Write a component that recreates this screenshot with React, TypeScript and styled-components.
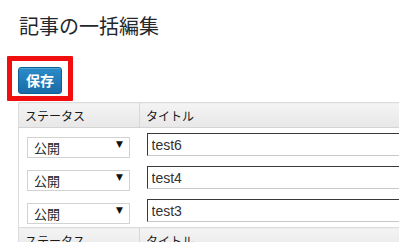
import React from "react";
import styled, { createGlobalStyle } from "styled-components";

const Global = createGlobalStyle`
  html, body { margin: 0; padding: 0; background: #fff; overflow: hidden; }
  body { font-family: "Noto Sans CJK JP", "Liberation Sans", sans-serif; color: #333; }
`;

const Page = styled.div`
  padding: 12px 0 0 18px;
  width: 520px;
`;

const Title = styled.h1`
  margin: 0 0 16px 1px;
  font-size: 20px;
  line-height: 28px;
  font-weight: 400;
  color: #23282d;
  font-family: "Noto Sans CJK JP", sans-serif;
`;

const Highlight = styled.div`
  display: inline-flex;
  margin-left: -11px;
  border: 5px solid #f00e0e;
  border-radius: 1px;
  padding: 6px 6px 2px 6px;
`;

const PrimaryButton = styled.button`
  height: 27px;
  width: 44px;
  padding: 0;
  border: 1px solid #0b5f94;
  border-radius: 3px;
  background: linear-gradient(to bottom, #2a8bc9, #1a6ca6);
  box-shadow: inset 0 1px 0 rgba(120, 200, 230, 0.5);
  color: #fff;
  font-family: "Noto Sans CJK JP", sans-serif;
  font-weight: 700;
  font-size: 14px;
  line-height: 25px;
  cursor: pointer;
`;

const Table = styled.table`
  margin-top: 1px;
  border-collapse: collapse;
  width: 500px;
  border-left: 1px solid #dcdcdc;
`;

const HeadCell = styled.th<{ $w?: number }>`
  width: ${(p) => (p.$w ? `${p.$w}px` : "auto")};
  height: 24px;
  padding: 0 6px;
  text-align: left;
  font-size: 12px;
  font-weight: 400;
  color: #1a1a1a;
  background: linear-gradient(to bottom, #f4f4f4, #e8e8e8);
  border-top: 1px solid #dcdcdc;
  border-bottom: 1px solid #d4d4d4;
  border-right: 1px solid #d8d8d8;
  font-family: "Noto Sans CJK JP", sans-serif;
`;

const Cell = styled.td<{ $pl: number }>`
  height: 33px;
  padding: 0 0 0 ${(p) => p.$pl}px;
  vertical-align: middle;
`;

const SelectWrap = styled.div`
  position: relative;
  width: 103px;
  height: 21px;
`;

const Select = styled.select`
  appearance: none;
  -webkit-appearance: none;
  width: 103px;
  height: 21px;
  margin: 0;
  padding: 0 0 0 6px;
  border: 1px solid #d2d2d2;
  border-radius: 0;
  background: #fff;
  color: #222;
  font-size: 13px;
  font-family: "Noto Sans CJK JP", sans-serif;
  outline: none;
`;

const Arrow = styled.span`
  position: absolute;
  right: 7px;
  top: 5px;
  font-size: 9px;
  line-height: 10px;
  color: #111;
  pointer-events: none;
  font-family: "DejaVu Sans", sans-serif;
`;

const TextInput = styled.input`
  box-sizing: border-box;
  display: block;
  width: 360px;
  height: 23px;
  margin: 0;
  padding: 0 4px;
  border-style: solid;
  border-width: 1px;
  border-color: #3a3a3a #c8c8c8 #c8c8c8 #3a3a3a;
  background: #fff;
  color: #333;
  font-size: 14px;
  font-family: "Liberation Sans", Arial, sans-serif;
  outline: none;
`;

const rows = ["test6", "test4", "test3"];

function HeaderRow() {
  return (
    <tr>
      <HeadCell $w={108}>ステータス</HeadCell>
      <HeadCell>タイトル</HeadCell>
    </tr>
  );
}

export default function App() {
  return (
    <Page>
      <Global />
      <Title>記事の一括編集</Title>
      <Highlight>
        <PrimaryButton>保存</PrimaryButton>
      </Highlight>
      <Table>
        <thead>
          <HeaderRow />
        </thead>
        <tbody>
          {rows.map((t) => (
            <tr key={t}>
              <Cell $pl={8}>
                <SelectWrap>
                  <Select defaultValue="publish">
                    <option value="publish">公開</option>
                    <option value="draft">下書き</option>
                  </Select>
                  <Arrow>▼</Arrow>
                </SelectWrap>
              </Cell>
              <Cell $pl={7}>
                <TextInput defaultValue={t} />
              </Cell>
            </tr>
          ))}
        </tbody>
        <tfoot>
          <HeaderRow />
        </tfoot>
      </Table>
    </Page>
  );
}
